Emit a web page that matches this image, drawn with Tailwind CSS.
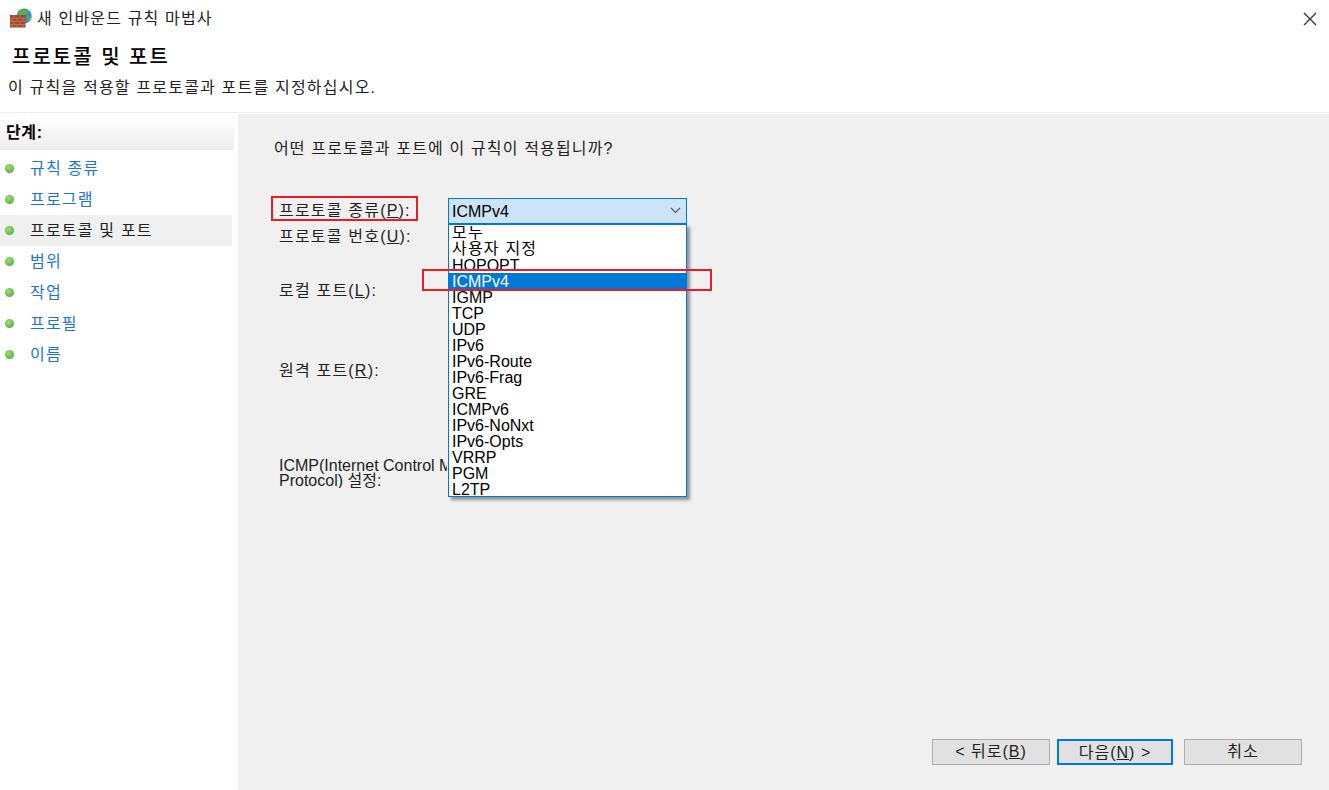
<!DOCTYPE html>
<html lang="ko">
<head>
	<meta charset="UTF-8">
	<title>새 인바운드 규칙 마법사</title>
	<script src="https://cdn.jsdelivr.net/npm/@tailwindcss/browser@4"></script>
</head>
<body class="bg-white">
<div class="w-[1329px] h-[790px] overflow-hidden flex flex-col bg-white text-[16px] text-[#222] font-['Liberation_Sans','Noto_Sans_CJK_KR',sans-serif]">
	<!-- title bar -->
	<div class="h-[37px] flex items-center pl-[9px] pr-[12px] shrink-0">
		<svg class="w-[23px] h-[22px] mr-[5px]" viewBox="0 0 23 22">
			<circle cx="15.2" cy="8" r="7.5" fill="#2f8fd8"/>
			<path d="M9 3 Q14 0 19 2 Q21 6 16 7 Q12 8 10 7Z" fill="#55b04a"/>
			<path d="M18.5 8 Q22.5 7 22.5 10 Q20.5 13 18.5 12Z" fill="#55b04a"/>
			<rect x="1" y="7" width="15.5" height="12.5" fill="#a2482f"/>
			<path d="M1 10.2H16.5M1 13.4H16.5M1 16.6H16.5M5 7V10.2M11 7V10.2M3 10.2V13.4M8 10.2V13.4M14 10.2V13.4M5 13.4V16.6M11 13.4V16.6M3 16.6V19.5M8 16.6V19.5M14 16.6V19.5" stroke="#c47d60" stroke-width="0.8" fill="none"/>
		</svg>
		<span class="tracking-[1.17px]">새 인바운드 규칙 마법사</span>
		<svg class="w-[14px] h-[14px] ml-auto mr-[0px]" viewBox="0 0 14 14"><path d="M1 1L13 13M13 1L1 13" stroke="#333" stroke-width="1.3"/></svg>
	</div>

	<!-- heading -->
	<div class="h-[76px] shrink-0 border-b border-[#eeeeee] relative">
		<div class="pl-[12px] pt-[8px] text-[20px] leading-[24px] font-medium text-black tracking-[2px]">프로토콜 및 포트</div>
		<div class="pl-[8px] pt-[9px] leading-[20px] tracking-[1.2px]">이 규칙을 적용할 프로토콜과 포트를 지정하십시오.</div>
	</div>

	<div class="flex-1 flex min-h-0 pt-[1px]">
		<!-- steps -->
		<div class="w-[238px] shrink-0 pt-[2px] pr-[4px] bg-white">
			<div class="h-[34px] bg-gradient-to-b from-white to-[#eeeeee] pl-[6px] flex items-center font-bold text-black tracking-[0.6px]">단계:</div>
			<div class="pt-[3px]">
				<div class="h-[31px] flex items-center pl-[5px]"><span class="w-[9px] h-[9px] rounded-full bg-[radial-gradient(circle_at_40%_35%,#9be07a,#3fa52c)] mr-[16px]"></span><span class="text-[#1a76d2] tracking-[1.2px]">규칙 종류</span></div>
				<div class="h-[31px] flex items-center pl-[5px]"><span class="w-[9px] h-[9px] rounded-full bg-[radial-gradient(circle_at_40%_35%,#9be07a,#3fa52c)] mr-[16px]"></span><span class="text-[#1a76d2] tracking-[1.2px]">프로그램</span></div>
				<div class="h-[31px] flex items-center pl-[5px] bg-[#f0f0f0] mr-[2px]"><span class="w-[9px] h-[9px] rounded-full bg-[radial-gradient(circle_at_40%_35%,#9be07a,#3fa52c)] mr-[16px]"></span><span class="tracking-[1.2px]">프로토콜 및 포트</span></div>
				<div class="h-[31px] flex items-center pl-[5px]"><span class="w-[9px] h-[9px] rounded-full bg-[radial-gradient(circle_at_40%_35%,#9be07a,#3fa52c)] mr-[16px]"></span><span class="text-[#1a76d2] tracking-[1.2px]">범위</span></div>
				<div class="h-[31px] flex items-center pl-[5px]"><span class="w-[9px] h-[9px] rounded-full bg-[radial-gradient(circle_at_40%_35%,#9be07a,#3fa52c)] mr-[16px]"></span><span class="text-[#1a76d2] tracking-[1.2px]">작업</span></div>
				<div class="h-[31px] flex items-center pl-[5px]"><span class="w-[9px] h-[9px] rounded-full bg-[radial-gradient(circle_at_40%_35%,#9be07a,#3fa52c)] mr-[16px]"></span><span class="text-[#1a76d2] tracking-[1.2px]">프로필</span></div>
				<div class="h-[31px] flex items-center pl-[5px]"><span class="w-[9px] h-[9px] rounded-full bg-[radial-gradient(circle_at_40%_35%,#9be07a,#3fa52c)] mr-[16px]"></span><span class="text-[#1a76d2] tracking-[1.2px]">이름</span></div>
			</div>
		</div>

		<!-- main panel -->
		<div class="flex-1 bg-[#f0f0f0] flex flex-col relative">
			<div class="pl-[36px] pt-[25px] h-[83px] leading-[20px] tracking-[1.15px]">어떤 프로토콜과 포트에 이 규칙이 적용됩니까?</div>

			<div class="pl-[41px] flex flex-col">
				<div class="h-[27px] flex items-center relative">
					<span class="w-[169px] mt-[1px] tracking-[1.2px]">프로토콜 종류(<u>P</u>):</span>
					<div class="w-[239px] h-[26px] bg-[#cce4f7] border border-[#0078d7] flex items-center pl-[3px] pr-[5px] text-black">
						<span class="mt-[2px]">ICMPv4</span>
						<svg class="w-[11px] h-[7px] ml-auto" viewBox="0 0 11 7"><path d="M1 1L5.5 5.5L10 1" stroke="#555" stroke-width="1.1" fill="none"/></svg>
					</div>

					<!-- open dropdown -->
					<div class="absolute left-[169px] top-[27px] w-[239px] h-[273px] bg-white border border-[#0078d7] shadow-[3px_3px_3px_rgba(0,0,0,0.4)] z-10 pl-[3px] pt-[1px] text-black leading-[16px] overflow-hidden">
						<div class="h-[15px] leading-[14px] overflow-hidden tracking-[1.2px]">모두</div>
						<div class="h-[16px] tracking-[1.2px]">사용자 지정</div>
						<div class="h-[16px] overflow-hidden leading-[18px]">HOPOPT</div>
						<div class="h-[16px] -ml-[3px] pl-[3px] bg-[#0078d7] text-white leading-[18px]">ICMPv4</div>
						<div class="h-[16px] overflow-hidden leading-[18px]">IGMP</div>
						<div class="h-[16px] leading-[18px]">TCP</div>
						<div class="h-[16px] leading-[18px]">UDP</div>
						<div class="h-[16px] leading-[18px]">IPv6</div>
						<div class="h-[16px] leading-[18px]">IPv6-Route</div>
						<div class="h-[16px] leading-[18px]">IPv6-Frag</div>
						<div class="h-[16px] leading-[18px]">GRE</div>
						<div class="h-[16px] leading-[18px]">ICMPv6</div>
						<div class="h-[16px] leading-[18px]">IPv6-NoNxt</div>
						<div class="h-[16px] leading-[18px]">IPv6-Opts</div>
						<div class="h-[16px] leading-[18px]">VRRP</div>
						<div class="h-[16px] leading-[18px]">PGM</div>
						<div class="h-[16px] leading-[18px]">L2TP</div>
					</div>

					<!-- red annotation boxes -->
					<div class="absolute left-[-8px] top-[-1px] w-[147px] h-[25px] border-2 border-[#ed1c24] z-20"></div>
					<div class="absolute left-[143px] top-[72px] w-[290px] h-[22px] border-2 border-[#ed1c24] z-20"></div>
				</div>
				<div class="h-[26px] flex items-center tracking-[1.2px]"><span>프로토콜 번호(<u>U</u>):</span></div>
				<div class="h-[27px]"></div>
				<div class="h-[53px] flex items-start tracking-[1.2px]"><span class="mt-[2px]">로컬 포트(<u>L</u>):</span></div>
				<div class="h-[27px]"></div>
				<div class="h-[53px] flex items-start tracking-[1.2px]"><span class="mt-[2px]">원격 포트(<u>R</u>):</span></div>
				<div class="h-[48px]"></div>
				<div class="leading-[15px] w-[168px] whitespace-nowrap overflow-hidden">ICMP(Internet Control Message<br>Protocol) 설정:</div>
			</div>

			<!-- wizard buttons -->
			<div class="mt-auto pb-[25px] pr-[27px] flex justify-end">
				<button class="w-[118px] h-[26px] bg-[#e1e1e1] border border-[#adadad] mr-[7px] tracking-[1px]">&lt; 뒤로(<u>B</u>)</button>
				<button class="w-[116px] h-[26px] bg-[#e1e1e1] border-2 border-[#0078d7] mr-[11px] tracking-[1px]">다음(<u>N</u>) &gt;</button>
				<button class="w-[118px] h-[26px] bg-[#e1e1e1] border border-[#adadad] tracking-[1px]">취소</button>
			</div>
		</div>
	</div>
</div>
</body>
</html>
